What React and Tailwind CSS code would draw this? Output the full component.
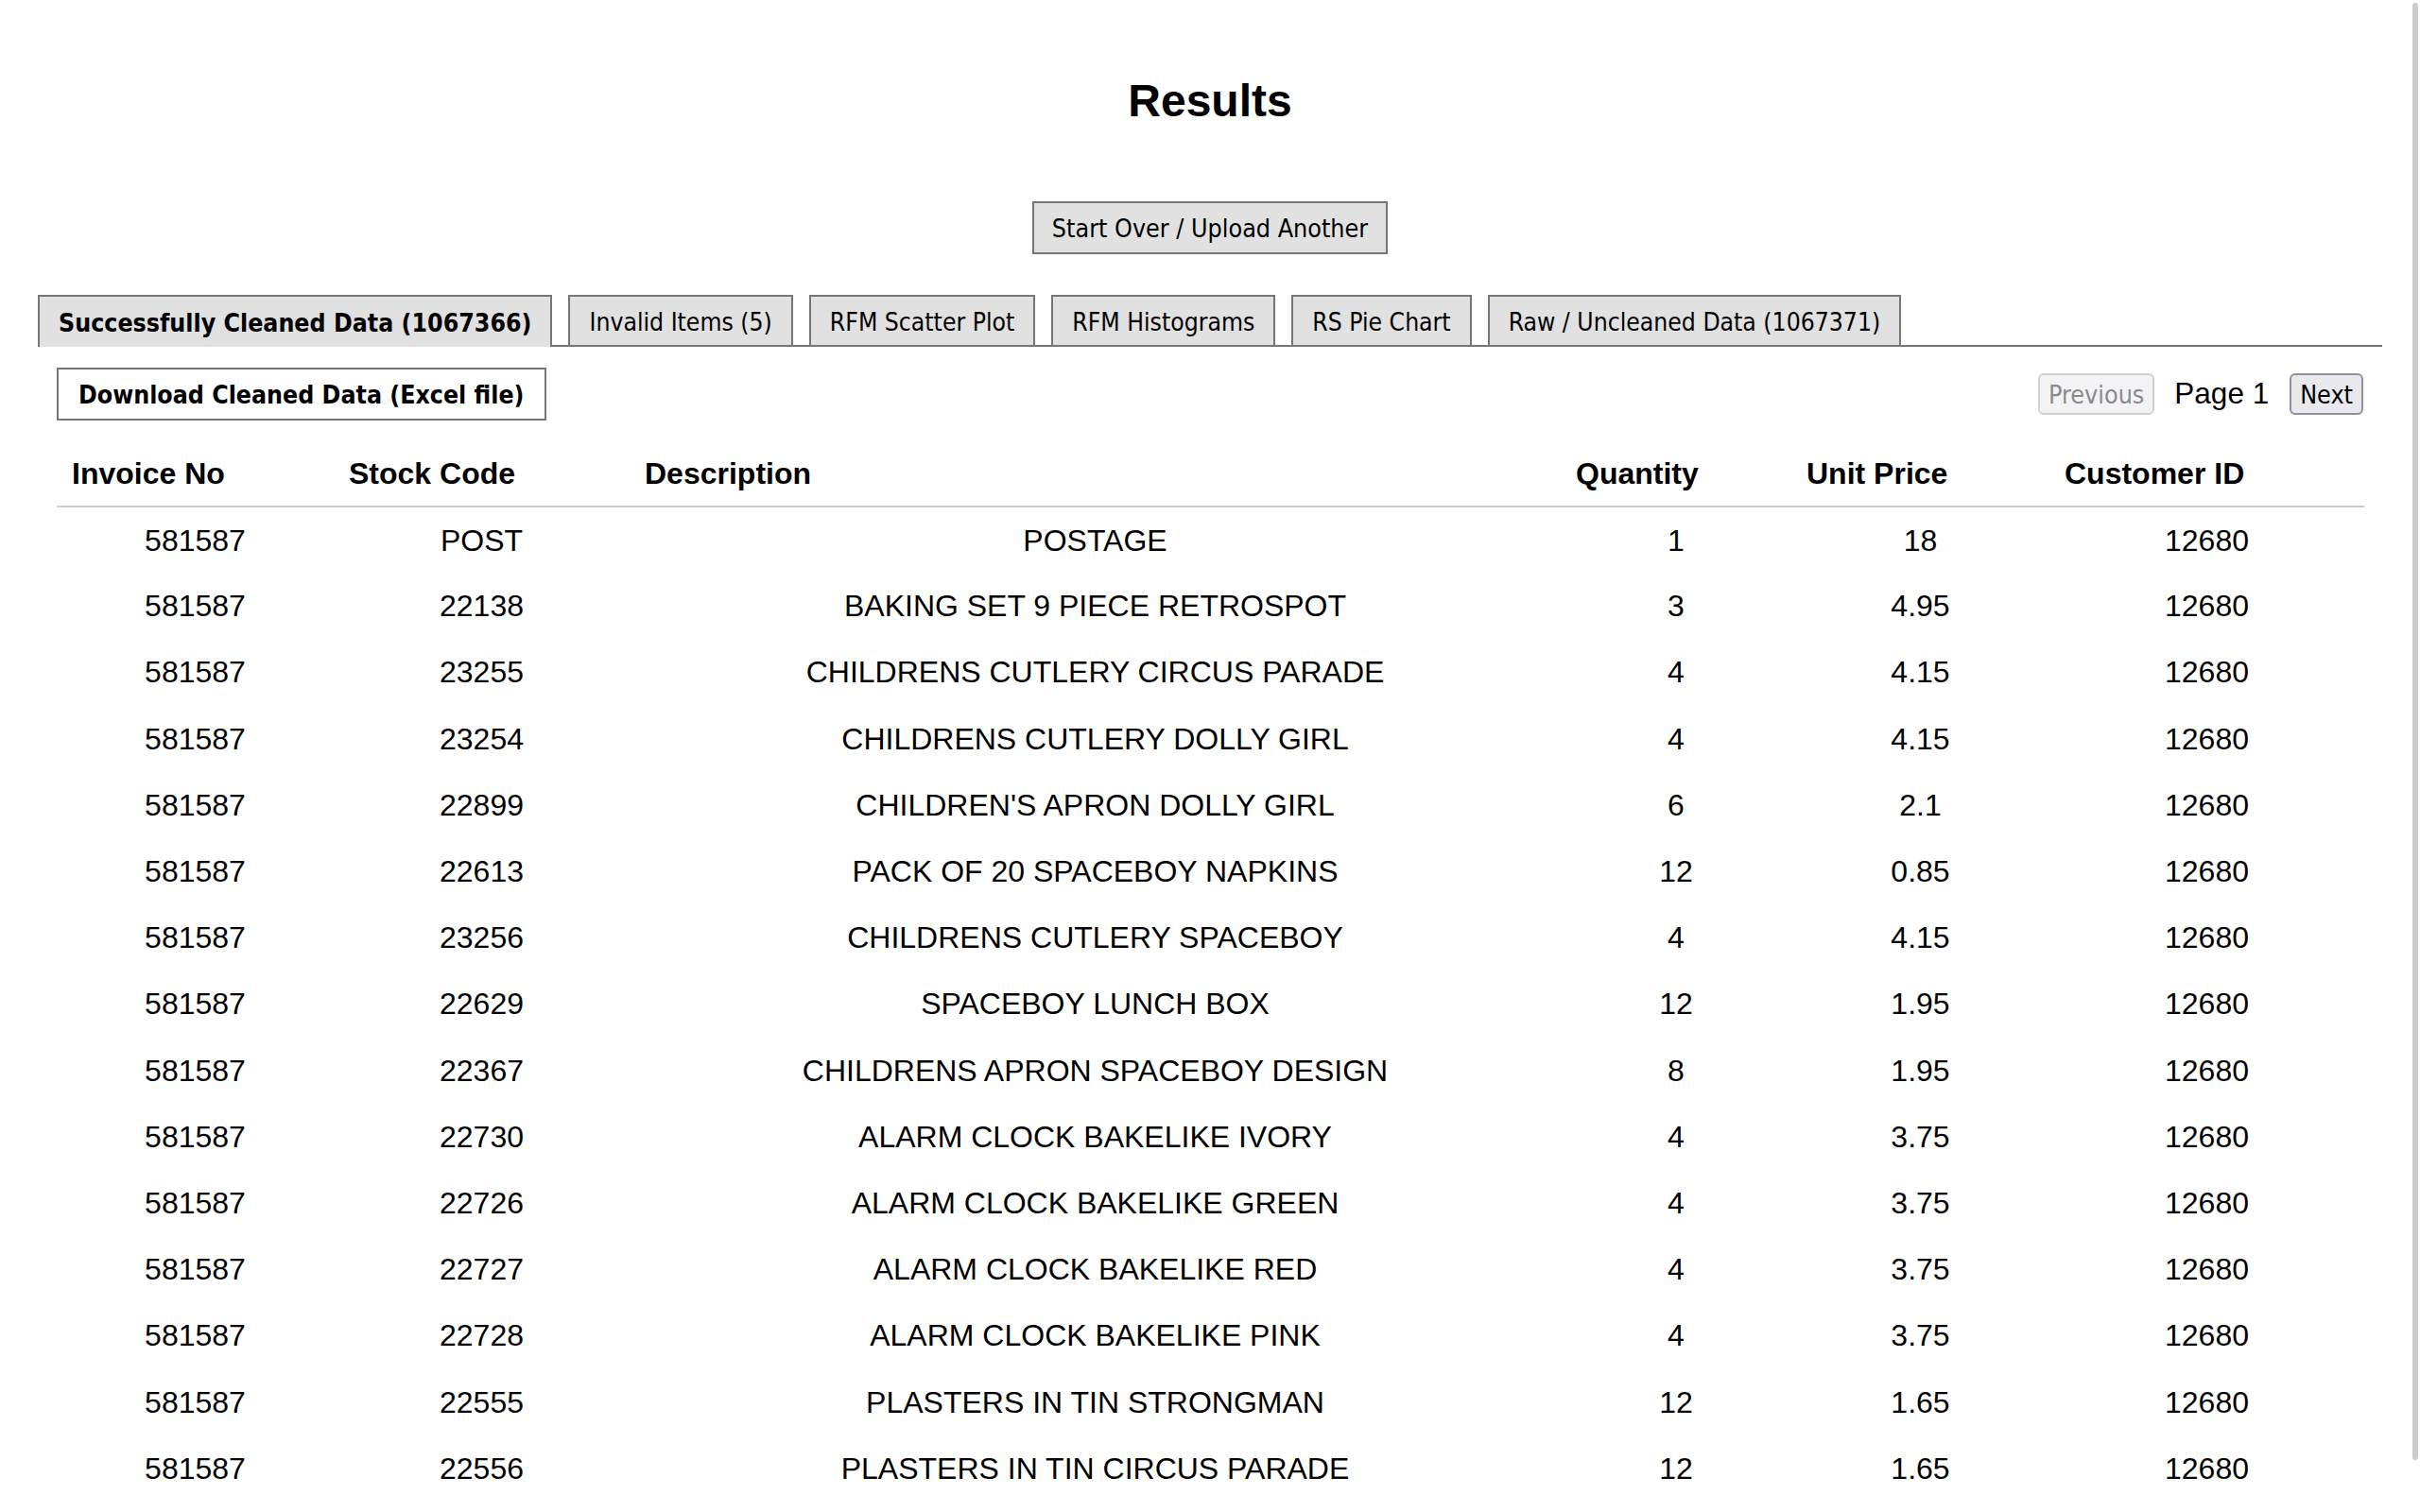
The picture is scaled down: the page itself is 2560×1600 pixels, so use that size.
const tahoma = "font-['DejaVu_Sans_Condensed','DejaVu_Sans',sans-serif] [font-stretch:condensed]"
const arial = "font-['Liberation_Sans',Arial,sans-serif]"

const rows = [
  ['581587', 'POST', 'POSTAGE', '1', '18', '12680'],
  ['581587', '22138', 'BAKING SET 9 PIECE RETROSPOT', '3', '4.95', '12680'],
  ['581587', '23255', 'CHILDRENS CUTLERY CIRCUS PARADE', '4', '4.15', '12680'],
  ['581587', '23254', 'CHILDRENS CUTLERY DOLLY GIRL', '4', '4.15', '12680'],
  ['581587', '22899', "CHILDREN'S APRON DOLLY GIRL", '6', '2.1', '12680'],
  ['581587', '22613', 'PACK OF 20 SPACEBOY NAPKINS', '12', '0.85', '12680'],
  ['581587', '23256', 'CHILDRENS CUTLERY SPACEBOY', '4', '4.15', '12680'],
  ['581587', '22629', 'SPACEBOY LUNCH BOX', '12', '1.95', '12680'],
  ['581587', '22367', 'CHILDRENS APRON SPACEBOY DESIGN', '8', '1.95', '12680'],
  ['581587', '22730', 'ALARM CLOCK BAKELIKE IVORY', '4', '3.75', '12680'],
  ['581587', '22726', 'ALARM CLOCK BAKELIKE GREEN', '4', '3.75', '12680'],
  ['581587', '22727', 'ALARM CLOCK BAKELIKE RED', '4', '3.75', '12680'],
  ['581587', '22728', 'ALARM CLOCK BAKELIKE PINK', '4', '3.75', '12680'],
  ['581587', '22555', 'PLASTERS IN TIN STRONGMAN', '12', '1.65', '12680'],
  ['581587', '22556', 'PLASTERS IN TIN CIRCUS PARADE', '12', '1.65', '12680'],
  ['581587', '22631', 'CIRCUS PARADE LUNCH BOX', '12', '1.95', '12680'],
]

const columns = [
  { label: 'Invoice No', w: 'w-[293px]' },
  { label: 'Stock Code', w: 'w-[313px]' },
  { label: 'Description', w: 'w-[985px]' },
  { label: 'Quantity', w: 'w-[244px]' },
  { label: 'Unit Price', w: 'w-[273px]' },
  { label: 'Customer ID', w: 'w-[333px]' },
]

const tabs = [
  'Successfully Cleaned Data (1067366)',
  'Invalid Items (5)',
  'RFM Scatter Plot',
  'RFM Histograms',
  'RS Pie Chart',
  'Raw / Uncleaned Data (1067371)',
]

export default function App() {
  const active = 0

  return (
    <div className="relative h-screen overflow-hidden bg-white text-black">
      <div className="px-[40px] pt-[79px]">
        <h2 className={`${arial} text-center text-[48px] font-bold leading-[55px]`}>Results</h2>

        <div className="mt-[79px] flex justify-center">
          <button className={`${tahoma} h-[56px] border-2 border-[#767676] bg-[#e1e1e1] px-[19px] pt-[3px] text-[26.67px] leading-none`}>
            Start Over / Upload Another
          </button>
        </div>

        <div className="mt-[43px] flex items-end gap-[17px] border-b-2 border-[#767676]">
          {tabs.map((t, i) => (
            <button
              key={t}
              className={
                i === active
                  ? `${tahoma} -mb-[2px] h-[55px] border-2 border-b-0 border-[#767676] bg-[#e1e1e1] px-[20px] pt-[3px] text-[26.5px] font-bold leading-none`
                  : `${tahoma} h-[53px] border-2 border-b-0 border-[#767676] bg-[#e1e1e1] px-[20px] pt-[3px] text-[26.3px] leading-none`
              }
            >
              {t}
            </button>
          ))}
        </div>

        <div className="px-[20px] pt-[22px]">
          <div className="flex items-center justify-between">
            <button className={`${tahoma} h-[56px] border-2 border-[#767676] bg-white px-[21px] pt-[3px] text-[26.5px] font-bold leading-none`}>
              Download Cleaned Data (Excel file)
            </button>
            <div className="flex items-center">
              <button disabled className={`${tahoma} h-[44px] rounded-[6px] border-2 border-[#cfcfd4] bg-[#f3f3f6] px-[9px] pt-[2px] text-[26.67px] leading-none text-[#8a8a8a]`}>
                Previous
              </button>
              <span className={`${arial} ml-[21px] mr-[22px] text-[31.5px]`}>Page 1</span>
              <button className={`${tahoma} h-[44px] rounded-[6px] border-2 border-[#8f8f9d] bg-[#e9e9ed] px-[9px] pt-[2px] text-[26.67px] leading-none`}>
                Next
              </button>
            </div>
          </div>

          <table className={`${arial} mt-[21px] w-full table-fixed border-collapse text-[32px]`}>
            <thead>
              <tr className="h-[70px] border-b-2 border-[#cccccc]">
                {columns.map(c => (
                  <th key={c.label} className={`${c.w} p-0 pl-[16px] text-left font-bold`}>{c.label}</th>
                ))}
              </tr>
            </thead>
            <tbody>
              {rows.map((r, i) => (
                <tr key={i} className="h-[70.2px]">
                  {r.map((v, j) => (
                    <td key={j} className="p-0 text-center">{v}</td>
                  ))}
                </tr>
              ))}
            </tbody>
          </table>
        </div>
      </div>

      {/* overlay scrollbar thumb */}
      <div className="absolute right-[2px] top-[3px] h-[1542px] w-[6px] rounded-full bg-[#cccccc]" />
    </div>
  )
}
